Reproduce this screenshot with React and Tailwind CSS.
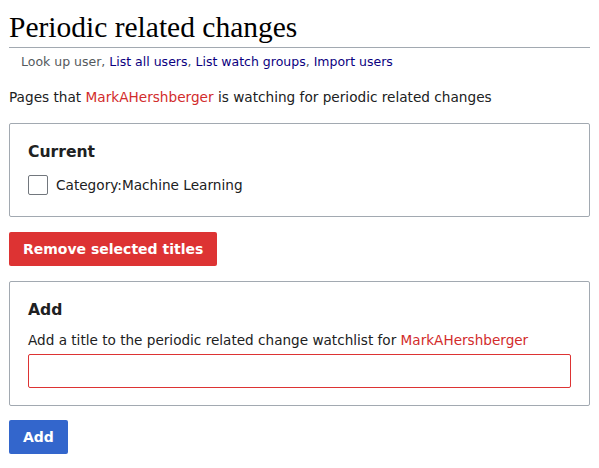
export default function App() {
  const sans = { fontFamily: '"DejaVu Sans", sans-serif' };
  return (
    <div className="min-h-[468px] bg-white px-[9px] pt-[9px] text-[#202122]" style={sans}>
      <h1
        className="border-b border-[#a2a9b1] pb-[2px] text-[29.5px] leading-[36px] text-black"
        style={{ fontFamily: '"Liberation Serif", "DejaVu Serif", serif' }}
      >
        Periodic related changes
      </h1>
      <div className="mt-[6px] pl-[12px] text-[12.5px] leading-[16px] text-[#54595d]">
        Look up user, <a className="text-[#0b0080]">List all users</a>,{' '}
        <a className="text-[#0b0080]">List watch groups</a>,{' '}
        <a className="text-[#0b0080]">Import users</a>
      </div>
      <p className="mt-[17px] text-[13.65px] leading-[20px]">
        Pages that <a className="text-[#d22c2c]">MarkAHershberger</a> is watching for periodic related changes
      </p>

      <div className="mt-[16px] rounded-[2px] border border-[#a2a9b1] px-[18px] pb-[21px] pt-[17px]">
        <div className="text-[15.6px] font-bold leading-[22px]">Current</div>
        <label className="mt-[12px] flex items-center gap-[8px] text-[13.65px] leading-[20px]">
          <span className="h-[20px] w-[20px] rounded-[2px] border border-[#72777d] bg-white" />
          Category:Machine Learning
        </label>
      </div>

      <button className="mt-[15px] h-[34px] rounded-[2px] bg-[#dd3333] px-[14px] text-[14px] font-bold text-white">
        Remove selected titles
      </button>

      <div className="mt-[15px] rounded-[2px] border border-[#a2a9b1] px-[18px] pb-[17px] pt-[17px]">
        <div className="text-[15.6px] font-bold leading-[22px]">Add</div>
        <div className="mt-[9px] text-[13.6px] leading-[20px]">
          Add a title to the periodic related change watchlist for{' '}
          <a className="text-[#d22c2c]">MarkAHershberger</a>
        </div>
        <div className="mt-[4px] h-[34px] rounded-[2px] border border-[#dd3333] bg-white" />
      </div>

      <button className="mt-[14px] h-[34px] rounded-[2px] bg-[#3366cc] px-[14px] text-[14px] font-bold text-white">
        Add
      </button>
    </div>
  );
}
